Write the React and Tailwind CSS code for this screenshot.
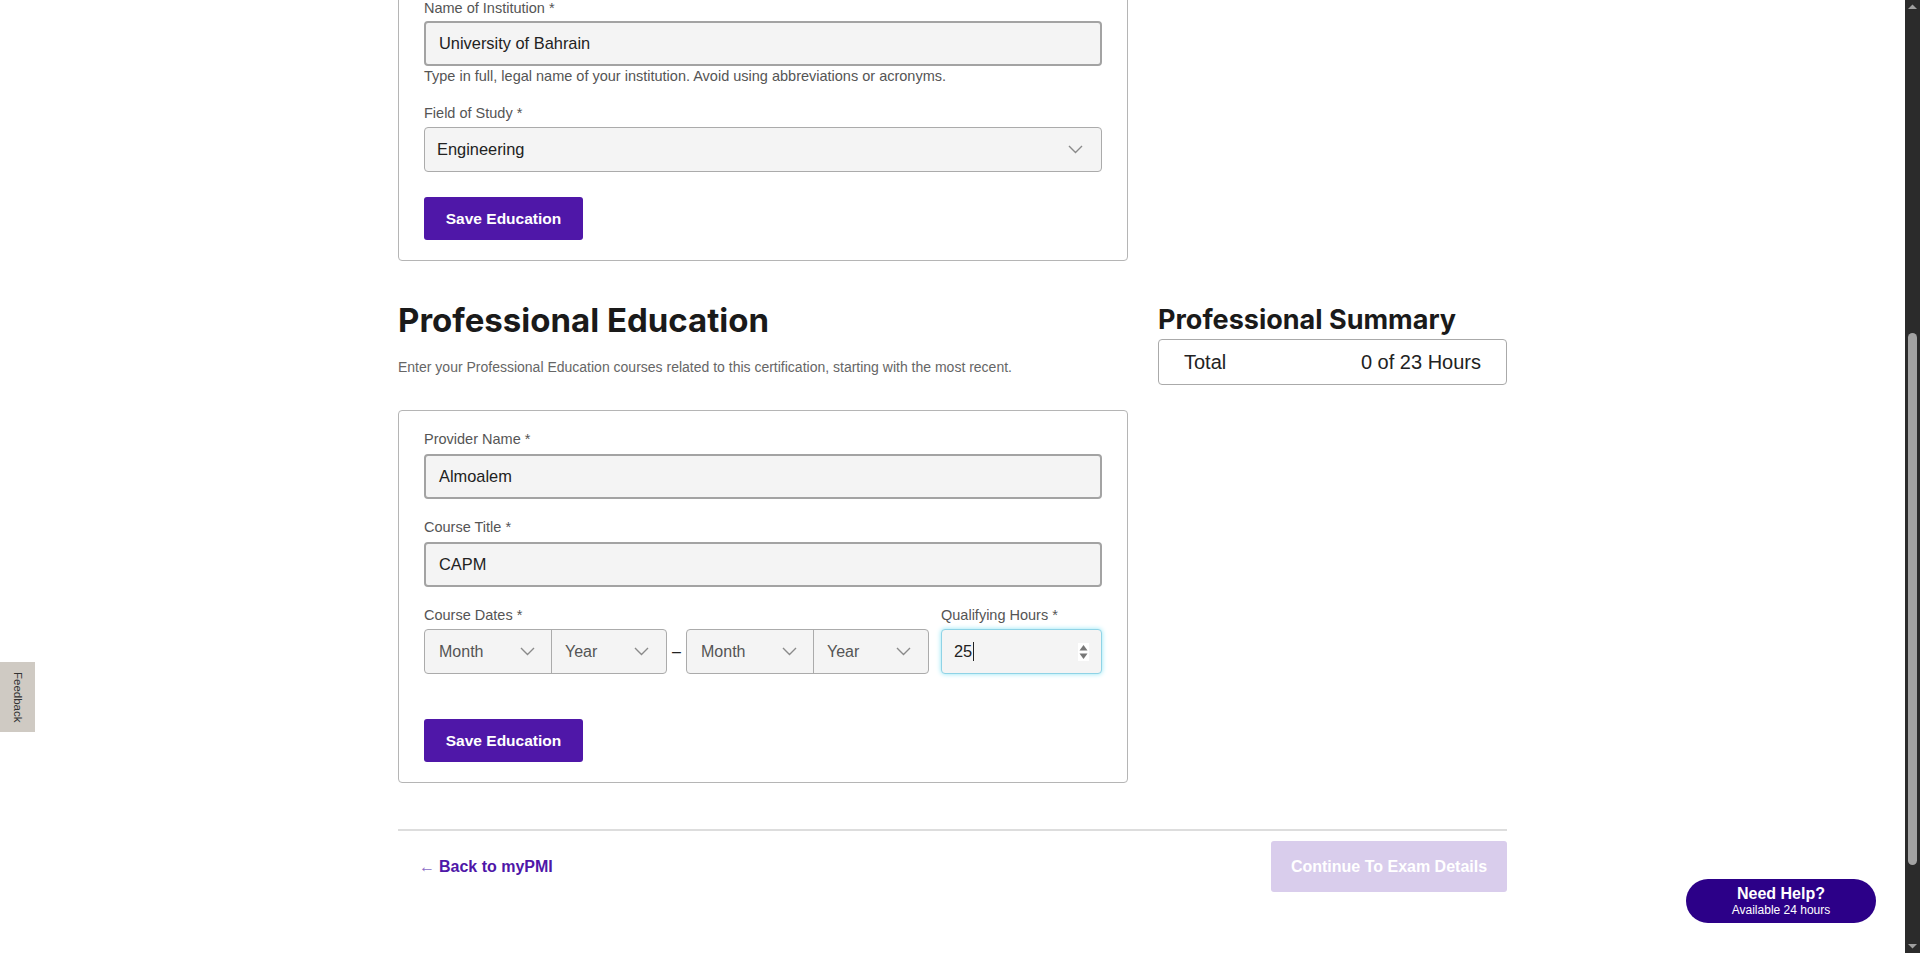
import React from "react";

const BODY = { fontFamily: '"Liberation Sans", Arial, sans-serif' };
const HEAD = { fontFamily: 'Inter, "Liberation Sans", sans-serif' };

function Chevron({ className = "" }) {
  return (
    <svg width="15" height="9" viewBox="0 0 15 9" className={className}>
      <polyline points="1,1 7.5,7.5 14,1" fill="none" stroke="#8a8a8a" strokeWidth="1.4" />
    </svg>
  );
}

function Label({ children }) {
  return <p className="text-[14.5px] leading-[16px] text-[#555]">{children}</p>;
}

function TextInput({ value }) {
  return (
    <div className="h-[45px] rounded-[4px] border-2 border-[#a3a3a3] bg-[#f4f4f4] flex items-center pl-[13px] text-[16.4px] text-[#222]">
      {value}
    </div>
  );
}

function SaveButton({ className = "" }) {
  return (
    <button
      type="button"
      className={`h-[43px] w-[159px] rounded-[3px] bg-[#4f17a8] text-white text-[15.5px] font-bold ${className}`}
    >
      Save Education
    </button>
  );
}

function DatePair() {
  return (
    <div className="flex h-[45px] w-[243px] rounded-[4px] border border-[#ababab] bg-[#f4f4f4] text-[16px] text-[#555]">
      <div className="w-[127px] flex items-center justify-between pl-[14px] pr-[16px] border-r border-[#ababab]">
        <span>Month</span>
        <Chevron />
      </div>
      <div className="flex-1 flex items-center justify-between pl-[13px] pr-[17px]">
        <span>Year</span>
        <Chevron />
      </div>
    </div>
  );
}

export default function App() {
  return (
    <div className="flex h-[953px] overflow-hidden bg-white" style={BODY}>
      <div className="relative flex-1">
        <div className="w-[1109px] mx-auto">
          {/* academic education card, scrolled partly out of view */}
          <div className="w-[730px] -mt-[20px] rounded-[4px] border border-[#b5b5b5] pt-[19px] pb-[20px] px-[25px]">
            <Label>Name of Institution *</Label>
            <div className="mt-[5px]">
              <TextInput value="University of Bahrain" />
            </div>
            <p className="text-[14.5px] leading-[20px] text-[#555]">
              Type in full, legal name of your institution. Avoid using abbreviations or acronyms.
            </p>
            <div className="mt-[19px]">
              <Label>Field of Study *</Label>
            </div>
            <div className="mt-[6px] h-[45px] rounded-[4px] border border-[#ababab] bg-[#f4f4f4] flex items-center justify-between pl-[12px] pr-[18px] text-[16.4px] text-[#222]">
              <span>Engineering</span>
              <Chevron />
            </div>
            <SaveButton className="mt-[25px]" />
          </div>

          <div className="flex gap-[30px] mt-[39px]">
            <div className="w-[730px]">
              <h2 className="text-[33px] leading-[40px] font-bold text-[#1a1a1a]" style={HEAD}>
                Professional Education
              </h2>
              <p className="mt-[17px] text-[14px] leading-[20px] text-[#666]">
                Enter your Professional Education courses related to this certification, starting with the most recent.
              </p>

              <div className="mt-[33px] rounded-[4px] border border-[#b5b5b5] pt-[20px] pb-[20px] px-[25px]">
                <Label>Provider Name *</Label>
                <div className="mt-[7px]">
                  <TextInput value="Almoalem" />
                </div>
                <div className="mt-[20px]">
                  <Label>Course Title *</Label>
                </div>
                <div className="mt-[7px]">
                  <TextInput value="CAPM" />
                </div>
                <div className="mt-[20px] flex">
                  <div>
                    <Label>Course Dates *</Label>
                    <div className="mt-[6px] flex items-center">
                      <DatePair />
                      <span className="w-[19px] text-center text-[16px] text-[#222]">–</span>
                      <DatePair />
                    </div>
                  </div>
                  <div className="ml-[12px] flex-1">
                    <Label>Qualifying Hours *</Label>
                    <div className="mt-[6px] h-[45px] rounded-[4px] border border-[#8fd3e6] bg-[#f4f4f4] shadow-[0_0_5px_#8ee6f5] flex items-center justify-between pl-[12px] pr-[12px] text-[16.4px] text-[#222]">
                      <span className="flex items-center">
                        25<span className="ml-[1px] inline-block w-[1px] h-[19px] bg-[#222]" />
                      </span>
                      <svg width="11" height="18" viewBox="0 0 11 18">
                        <rect x="0" y="0" width="11" height="18" fill="#fff" />
                        <polygon points="1.5,7.5 5.5,2 9.5,7.5" fill="#777" />
                        <polygon points="1.5,10.5 5.5,16 9.5,10.5" fill="#777" />
                      </svg>
                    </div>
                  </div>
                </div>
                <SaveButton className="mt-[45px]" />
              </div>
            </div>

            <div className="flex-1 pt-[5px]">
              <h3 className="text-[27px] leading-[30px] font-bold text-[#1a1a1a]" style={HEAD}>
                Professional Summary
              </h3>
              <div className="mt-[4px] h-[46px] rounded-[4px] border border-[#aaa] flex items-center justify-between pl-[25px] pr-[25px] text-[20px] text-[#222]">
                <span>Total</span>
                <span>0 of 23 Hours</span>
              </div>
            </div>
          </div>

          <div className="mt-[46px] h-[2px] bg-[#dddddd]" />
          <div className="mt-[10px] flex items-center justify-between">
            <a className="pl-[21px] text-[16px] font-bold text-[#4f17a8] flex items-center gap-[4px]">
              <span className="text-[#8b6cc7] font-normal">←</span>
              <span>Back to myPMI</span>
            </a>
            <button
              type="button"
              className="h-[51px] w-[236px] rounded-[3px] bg-[#d9cdec] text-white text-[16px] font-bold"
            >
              Continue To Exam Details
            </button>
          </div>
        </div>

        {/* feedback tab */}
        <div className="absolute left-0 top-[662px] w-[35px] h-[70px] bg-[#cfcac3] flex items-center justify-center">
          <span
            className="text-[11.5px] text-[#333] whitespace-nowrap"
            style={{ writingMode: "vertical-rl" }}
          >
            Feedback
          </span>
        </div>

        {/* help pill */}
        <div className="absolute right-[29px] bottom-[30px] w-[190px] h-[44px] rounded-full bg-[#2c0088] flex flex-col items-center justify-center text-white">
          <span className="text-[16px] leading-[18px] font-bold">Need Help?</span>
          <span className="text-[12px] leading-[15px]">Available 24 hours</span>
        </div>
      </div>

      {/* scrollbar */}
      <div className="w-[15px] bg-[#2b2b2b] flex flex-col items-center">
        <svg width="9" height="6" viewBox="0 0 9 6" className="mt-[4px]">
          <polygon points="0,5 4.5,0.5 9,5" fill="#9f9f9f" />
        </svg>
        <div className="mt-[323px] w-[9px] h-[532px] rounded-full bg-[#a3a3a3]" />
        <div className="flex-1" />
        <svg width="9" height="6" viewBox="0 0 9 6" className="mb-[4px]">
          <polygon points="0,1 4.5,5.5 9,1" fill="#9f9f9f" />
        </svg>
      </div>
    </div>
  );
}
